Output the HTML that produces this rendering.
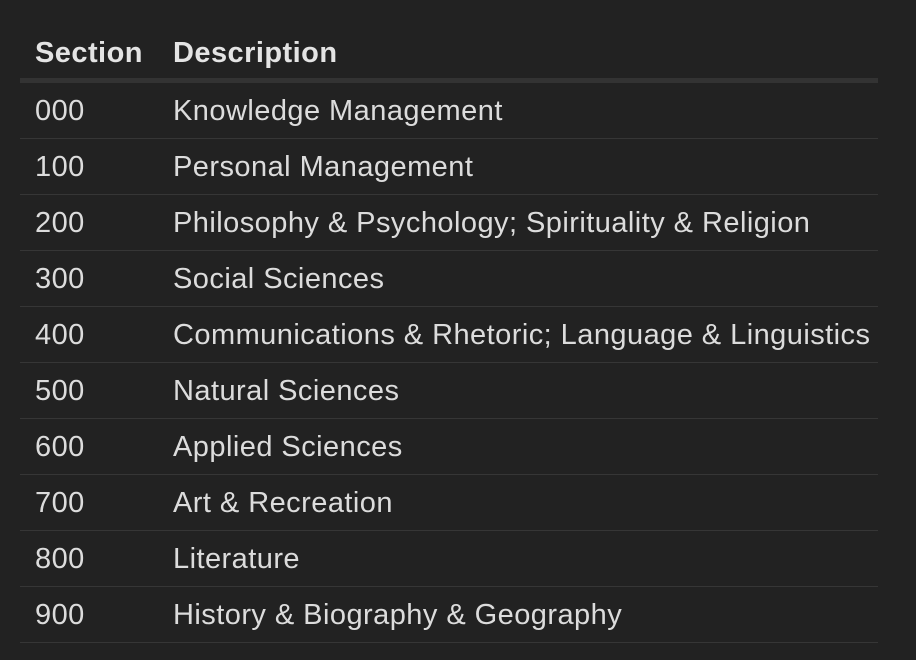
<!DOCTYPE html>
<html><head><style>
html,body{margin:0;padding:0;background:#222;width:916px;height:660px;overflow:hidden}
table{position:absolute;left:20px;top:25px;width:858px;border-collapse:collapse;font-family:"Liberation Sans",sans-serif;font-size:29px;letter-spacing:0.45px;color:#dcdcdc}
th{text-align:left;font-weight:bold;height:53px;line-height:56px;padding:0 0 0 15px;border-bottom:5px solid #333;color:#e4e4e4;overflow:hidden}
td{height:55px;line-height:56px;padding:0 0 0 15px;border-bottom:1px solid #363636;white-space:nowrap;overflow:hidden}
td div,th div{height:55px;overflow:hidden}
th div{height:53px}
th:first-child,td:first-child{width:123px}
</style></head><body>
<table>
<tr><th><div>Section</div></th><th><div>Description</div></th></tr>
<tr><td><div>000</div></td><td><div>Knowledge Management</div></td></tr>
<tr><td><div>100</div></td><td><div>Personal Management</div></td></tr>
<tr><td><div>200</div></td><td><div>Philosophy &amp; Psychology; Spirituality &amp; Religion</div></td></tr>
<tr><td><div>300</div></td><td><div>Social Sciences</div></td></tr>
<tr><td><div>400</div></td><td><div>Communications &amp; Rhetoric; Language &amp; Linguistics</div></td></tr>
<tr><td><div>500</div></td><td><div>Natural Sciences</div></td></tr>
<tr><td><div>600</div></td><td><div>Applied Sciences</div></td></tr>
<tr><td><div>700</div></td><td><div>Art &amp; Recreation</div></td></tr>
<tr><td><div>800</div></td><td><div>Literature</div></td></tr>
<tr><td><div>900</div></td><td><div>History &amp; Biography &amp; Geography</div></td></tr>
</table>
</body></html>
